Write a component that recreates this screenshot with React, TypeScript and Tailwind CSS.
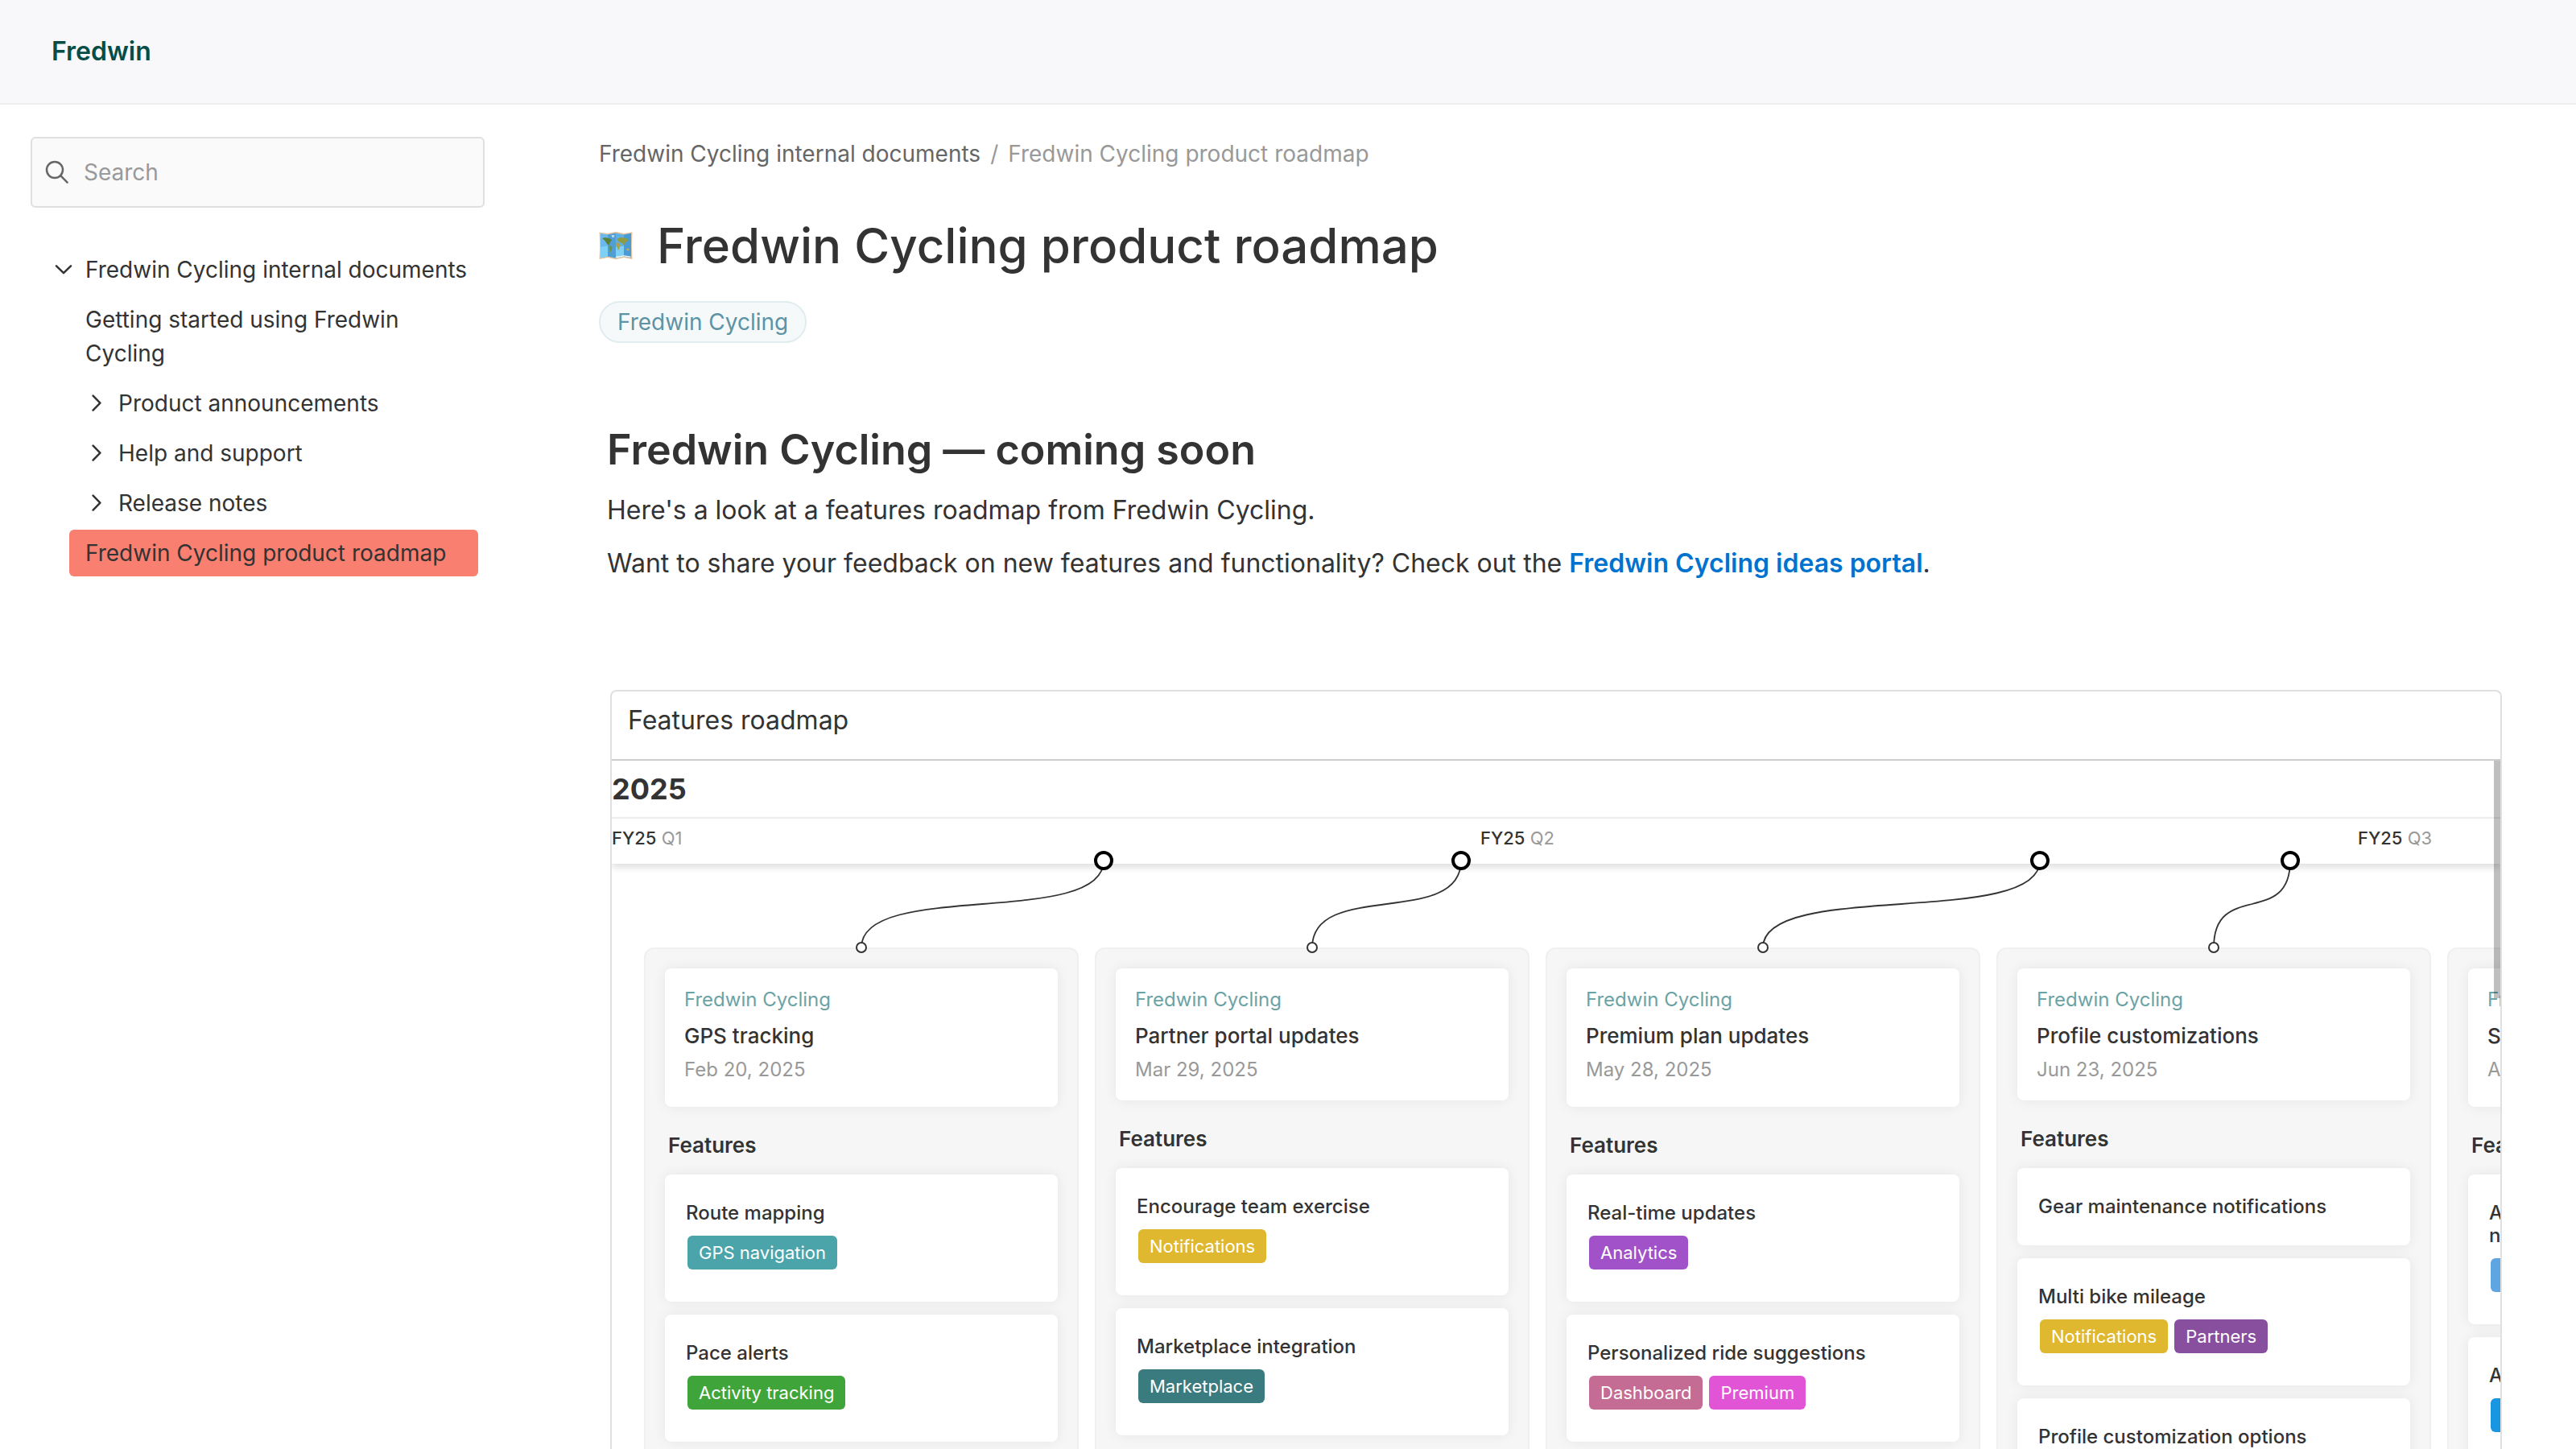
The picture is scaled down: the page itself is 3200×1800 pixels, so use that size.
import { useState } from 'react';

type Tag = { label: string; className: string };
type Feature = { title: string; tags: Tag[] };
type Release = { product: string; name: string; date: string; tall: boolean; features: Feature[] };

const navItems = [
  { label: 'Getting started using Fredwin Cycling', expandable: false, active: false },
  { label: 'Product announcements', expandable: true, active: false },
  { label: 'Help and support', expandable: true, active: false },
  { label: 'Release notes', expandable: true, active: false },
  { label: 'Fredwin Cycling product roadmap', expandable: false, active: true },
];

const quarters = [
  { year: 'FY25', quarter: 'Q1', className: 'w-[1079px]' },
  { year: 'FY25', quarter: 'Q2', className: 'w-[1090px]' },
  { year: 'FY25', quarter: 'Q3', className: 'w-[1090px]' },
];

// timeline pin x -> release column x
const connectors = [
  { from: 611, to: 310 },
  { from: 1055, to: 870 },
  { from: 1774, to: 1430 },
  { from: 2085, to: 1990 },
];

const releases: Release[] = [
  {
    product: 'Fredwin Cycling', name: 'GPS tracking', date: 'Feb 20, 2025', tall: true,
    features: [
      { title: 'Route mapping', tags: [{ label: 'GPS navigation', className: 'bg-[#4ba4aa]' }] },
      { title: 'Pace alerts', tags: [{ label: 'Activity tracking', className: 'bg-[#3fa53a]' }] },
    ],
  },
  {
    product: 'Fredwin Cycling', name: 'Partner portal updates', date: 'Mar 29, 2025', tall: false,
    features: [
      { title: 'Encourage team exercise', tags: [{ label: 'Notifications', className: 'bg-[#dfb82f]' }] },
      { title: 'Marketplace integration', tags: [{ label: 'Marketplace', className: 'bg-[#3a7b7f]' }] },
    ],
  },
  {
    product: 'Fredwin Cycling', name: 'Premium plan updates', date: 'May 28, 2025', tall: true,
    features: [
      { title: 'Real-time updates', tags: [{ label: 'Analytics', className: 'bg-[#a152c8]' }] },
      {
        title: 'Personalized ride suggestions',
        tags: [{ label: 'Dashboard', className: 'bg-[#c46c94]' }, { label: 'Premium', className: 'bg-[#e254d6]' }],
      },
    ],
  },
  {
    product: 'Fredwin Cycling', name: 'Profile customizations', date: 'Jun 23, 2025', tall: false,
    features: [
      { title: 'Gear maintenance notifications', tags: [] },
      {
        title: 'Multi bike mileage',
        tags: [{ label: 'Notifications', className: 'bg-[#dfb82f]' }, { label: 'Partners', className: 'bg-[#874f9e]' }],
      },
      { title: 'Profile customization options', tags: [] },
    ],
  },
  {
    product: 'Fredwin Cycling', name: 'S', date: 'A', tall: true,
    features: [
      { title: 'A\nn', tags: [{ label: '', className: 'bg-[#5fa5e2]' }] },
      { title: 'A', tags: [{ label: '', className: 'bg-[#1896e2]' }] },
    ],
  },
];

function SearchIcon() {
  return (
    <svg viewBox="0 0 30 30" className="w-[30px] h-[30px] shrink-0" fill="none" stroke="#666" strokeWidth="2.5" strokeLinecap="round">
      <circle cx="12" cy="12" r="10" />
      <path d="M19.2 19.2 L27.6 27.6" />
    </svg>
  );
}

function Chevron({ open }: { open?: boolean }) {
  return open ? (
    <svg viewBox="0 0 22 12" className="w-[22px] h-3 shrink-0" fill="none" stroke="#333" strokeWidth="2.5" strokeLinecap="round" strokeLinejoin="round">
      <path d="M2 1.4 L11 10.2 L20 1.4" />
    </svg>
  ) : (
    <svg viewBox="0 0 12 22" className="w-3 h-[22px] shrink-0" fill="none" stroke="#333" strokeWidth="2.5" strokeLinecap="round" strokeLinejoin="round">
      <path d="M1.6 1.6 L10.4 10.6 L1.6 19.6" />
    </svg>
  );
}

function MapIcon() {
  return (
    <svg viewBox="0 0 42 36" className="w-[42px] h-9 shrink-0">
      <path d="M0.5 1.5 L11 3 L21 0.8 L31 3 L41.5 1.2 L40.8 18 L41.5 35 L31 33 L21 35.2 L11 33 L0.5 35 L1.2 18 Z" fill="#e3c3a0" />
      <path d="M2 3 L11 4.4 V31.6 L2 33.2 Z" fill="#6bb9ea" />
      <path d="M11 4.4 L21 2.4 V33.6 L11 31.6 Z" fill="#4f9fd6" />
      <path d="M21 2.4 L31 4.4 V31.6 L21 33.6 Z" fill="#5fb0e6" />
      <path d="M31 4.4 L40 2.8 V33.4 L31 31.6 Z" fill="#4a9bd4" />
      <path d="M2 20 L11 18.5 V31.6 L2 33.2 Z M21 20 L31 18.5 V31.6 L21 33.6 Z" fill="#7fd0f7" />
      <path d="M4 9 L8 8 L14 9.5 L16 11 L13.5 14.5 L12.5 17.5 L10 16 L7.5 12 Z" fill="#5c7f3a" />
      <path d="M12.5 18 L16.5 19.5 L16 23 L14.2 27 L13 23 Z" fill="#6f9440" />
      <path d="M15.5 5 L19.5 5 L18.5 8 L16.5 8 Z" fill="#b9d9e8" />
      <path d="M22 10 L27 7.8 L34 9 L37 11 L33 14.5 L30.5 17.5 L28.5 14.5 L26 14 L24 12.5 Z" fill="#8f9c43" />
      <path d="M20.5 14.5 L24.5 14.5 L27 17.5 L25.5 21.5 L23.8 24.5 L22.5 19.5 Z" fill="#a9a44c" />
      <path d="M34 22 L37.5 21.5 L38 24 L35 24.8 Z" fill="#c0a35c" />
      <path d="M21 31.8 L31 30.2 L39.5 31.6 V33 L31 31.6 L21 33.4 Z" fill="#eef3f4" />
    </svg>
  );
}

function FeatureCard({ feature }: { feature: Feature }) {
  return (
    <div className="bg-white rounded-lg px-[26px] py-[34px] shadow-[0_0_16px_rgba(0,0,0,0.07)]">
      <h4 className="text-2xl leading-7 font-medium whitespace-pre-line">{feature.title}</h4>
      {feature.tags.length > 0 && (
        <div className="flex gap-2 mt-[14px] mb-[6px] ml-[2px]">
          {feature.tags.map((tag, i) => (
            <span key={i} className={`h-[42px] min-w-16 px-[14px] rounded-md text-[22px] leading-[42px] text-white ${tag.className}`}>{tag.label}</span>
          ))}
        </div>
      )}
    </div>
  );
}

function ReleaseColumn({ release }: { release: Release }) {
  return (
    <section className="w-[540px] shrink-0 bg-[#f6f6f6] border-2 border-b-0 border-[#f0f0f0] rounded-t-xl px-6 pt-6">
      <div className={`bg-white rounded-lg px-6 pt-4 shadow-[0_0_16px_rgba(0,0,0,0.07)] ${release.tall ? 'pb-[26px]' : 'pb-[18px]'}`}>
        <p className="text-2xl leading-[46px] text-[#6ba3a5]">{release.product}</p>
        <h3 className="text-[26px] leading-[44px] font-medium">{release.name}</h3>
        <p className="text-2xl leading-10 text-[#999]">{release.date}</p>
      </div>
      <h4 className="pl-1 pt-3 text-[26px] leading-[72px] font-semibold">Features</h4>
      <div className="flex flex-col gap-4">
        {release.features.map((feature) => <FeatureCard key={feature.title} feature={feature} />)}
      </div>
    </section>
  );
}

function Roadmap() {
  return (
    <div className="relative flex-1 min-h-0 flex flex-col ml-[14px] mt-[132px] border-2 border-b-0 border-[#e0e0e0] rounded-t-lg overflow-hidden">
      <h3 className="px-5 pt-4 pb-7 text-[32px] leading-10 border-b-2 border-[#ccc]">Features roadmap</h3>
      <div className="text-4xl leading-[70px] font-bold border-b-2 border-[#eee]">2025</div>
      <div className="flex pt-2 pb-4 text-[22px] leading-8 shadow-[0_5px_8px_rgba(0,0,0,0.12)]">
        {quarters.map((q) => (
          <div key={q.quarter} className={`shrink-0 ${q.className}`}>
            <span className="font-medium">{q.year}</span> <span className="text-[#999]">{q.quarter}</span>
          </div>
        ))}
      </div>
      <svg className="relative z-10 w-full h-[104px] shrink-0 overflow-visible" fill="none">
        {connectors.map((c) => (
          <g key={c.from}>
            <path d={`M${c.from} -4 C${c.from} 80 ${c.to} 20 ${c.to} 104`} stroke="#333" strokeWidth="1.8" />
            <circle cx={c.from} cy="-4" r="10" fill="#fff" stroke="#000" strokeWidth="4" />
            <circle cx={c.to} cy="104" r="6" fill="#fff" stroke="#333" strokeWidth="2" />
          </g>
        ))}
      </svg>
      <div className="flex-1 min-h-0 flex gap-5 pl-10">
        {releases.map((release) => <ReleaseColumn key={release.name} release={release} />)}
      </div>
      <div className="absolute right-0 top-[86px] z-20 w-2 h-[295px] bg-black/25" />
    </div>
  );
}

export default function App() {
  const [search, setSearch] = useState('');

  return (
    <div className="h-screen flex flex-col overflow-hidden bg-white text-[#333] font-[Inter,sans-serif]">
      <header className="shrink-0 h-[130px] flex items-center px-16 bg-[#f8f8fa] border-b-2 border-[#eee]">
        <a href="#" className="text-[32px] leading-10 font-semibold text-[#064d48]">Fredwin</a>
      </header>

      <div className="flex-1 min-h-0 flex">
        <aside className="w-[640px] shrink-0 px-[38px] pt-10">
          <label className="flex items-center gap-[18px] h-[88px] px-4 bg-[#fafafa] border-2 border-[#e0e0e0] rounded-md">
            <SearchIcon />
            <input
              type="text"
              aria-label="Search"
              placeholder="Search"
              value={search}
              onChange={(e) => setSearch(e.target.value)}
              className="flex-1 min-w-0 text-[28px] leading-[42px] bg-transparent outline-none placeholder-[#999]"
            />
          </label>

          <nav className="flex flex-col gap-1 mt-12 text-[28px] leading-[42px]">
            <a href="#" className="flex items-center gap-4 pl-[30px] py-2 whitespace-nowrap">
              <Chevron open />
              Fredwin Cycling internal documents
            </a>
            {navItems.map((item) => (
              <a
                key={item.label}
                href="#"
                className={`flex items-center gap-[21px] ml-12 mr-2 py-2 rounded-md ${item.expandable ? 'pl-7' : 'px-5'} ${item.active ? 'bg-[#f97f70]' : ''}`}
              >
                {item.expandable && <Chevron />}
                {item.label}
              </a>
            ))}
          </nav>
        </aside>

        <main className="flex-1 min-w-0 flex flex-col pl-[104px] pr-[92px] pt-10">
          <nav className="flex gap-3 text-[28px] leading-[42px] text-[#999]">
            <a href="#" className="text-[#666]">Fredwin Cycling internal documents</a>
            <span>/</span>
            <span>Fredwin Cycling product roadmap</span>
          </nav>

          <div className="flex items-center gap-[30px] mt-14">
            <MapIcon />
            <h1 className="text-[60px] leading-[74px] font-medium">Fredwin Cycling product roadmap</h1>
          </div>
          <a href="#" className="self-start mt-8 h-[52px] px-[21px] text-[28px] leading-[48px] text-[#5c93a5] bg-[#f6f9fa] border-2 border-[#e1ecef] rounded-full">
            Fredwin Cycling
          </a>

          <h2 className="ml-[10px] mt-[101px] text-[52px] leading-[64px] font-semibold">Fredwin Cycling — coming soon</h2>
          <p className="ml-[10px] mt-[18px] text-[32px] leading-[50px]">Here's a look at a features roadmap from Fredwin Cycling.</p>
          <p className="ml-[10px] mt-4 text-[32px] leading-[50px]">
            Want to share your feedback on new features and functionality? Check out the{' '}
            <a href="#" className="font-semibold text-[#0073cf]">Fredwin Cycling ideas portal</a>.
          </p>

          <Roadmap />
        </main>
      </div>
    </div>
  );
}
